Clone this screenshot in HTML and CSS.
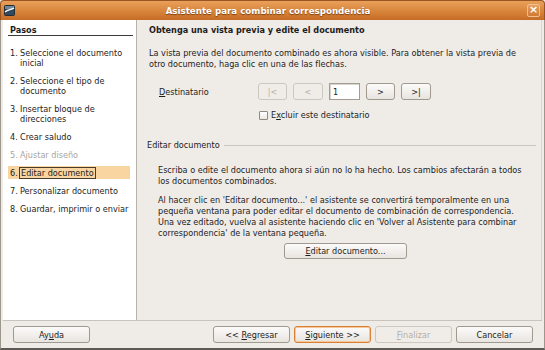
FILE: index.html
```html
<!DOCTYPE html>
<html lang="es">
<head>
<meta charset="utf-8">
<title>Asistente para combinar correspondencia</title>
<link rel="stylesheet" href="styles.css">
</head>
<body>
<div class="window">
  <header class="titlebar">
    <svg class="app-icon" width="11" height="11" viewBox="0 0 11 11">
      <rect x="0.5" y="0.5" width="10" height="10" rx="1" fill="#33485a" stroke="#1f2d38"/>
      <rect x="1" y="1" width="9" height="3" fill="#6f8797"/>
      <path d="M1 7 C4 4.5 7 5 10 3" stroke="#ffffff" stroke-width="1.4" fill="none"/>
    </svg>
    <div class="title">Asistente para combinar correspondencia</div>
    <div class="close">×</div>
  </header>
  <div class="frame">
    <div class="main">
      <nav class="steps">
        <div class="steps-title">Pasos</div>
        <ol class="step-list">
          <li class="step"><span class="num">1.</span><span class="txt">Seleccione el documento inicial</span></li>
          <li class="step"><span class="num">2.</span><span class="txt">Seleccione el tipo de documento</span></li>
          <li class="step"><span class="num">3.</span><span class="txt">Insertar bloque de direcciones</span></li>
          <li class="step"><span class="num">4.</span><span class="txt">Crear saludo</span></li>
          <li class="step disabled"><span class="num">5.</span><span class="txt">Ajustar diseño</span></li>
          <li class="step current"><span class="num">6.</span><span class="txt"><span class="focus">Editar documento</span></span></li>
          <li class="step"><span class="num">7.</span><span class="txt">Personalizar documento</span></li>
          <li class="step"><span class="num">8.</span><span class="txt">Guardar, imprimir o enviar</span></li>
        </ol>
      </nav>
      <section class="page">
        <h1 class="page-title">Obtenga una vista previa y edite el documento</h1>
        <p class="intro">La vista previa del documento combinado es ahora visible. Para obtener la vista previa de<br>otro documento, haga clic en una de las flechas.</p>
        <div class="nav-row">
          <span class="nav-label"><u>D</u>estinatario</span>
          <div class="nav-controls">
            <span class="btn small disabled"><span>|&lt;</span></span>
            <span class="btn small disabled wide"><span>&lt;</span></span>
            <span class="field">1</span>
            <span class="btn small"><span>&gt;</span></span>
            <span class="btn small wide"><span>&gt;|</span></span>
          </div>
        </div>
        <div class="check-row">
          <span class="checkbox"></span>
          <span>E<u>x</u>cluir este destinatario</span>
        </div>
        <div class="group-head">
          <span>Editar documento</span>
          <span class="group-line"></span>
        </div>
        <div class="group-body">
          <p>Escriba o edite el documento ahora si aún no lo ha hecho. Los cambios afectarán a todos<br>los documentos combinados.</p>
          <p class="second">Al hacer clic en 'Editar documento...' el asistente se convertirá temporalmente en una<br>pequeña ventana para poder editar el documento de combinación de correspondencia.<br>Una vez editado, vuelva al asistente haciendo clic en 'Volver al Asistente para combinar<br>correspondencia' de la ventana pequeña.</p>
          <div class="edit-wrap">
            <span class="btn edit"><span><u>E</u>ditar documento...</span></span>
          </div>
        </div>
      </section>
    </div>
    <footer class="footer">
      <span class="btn foot"><span>Ay<u>u</u>da</span></span>
      <div class="foot-right">
        <span class="btn foot"><span>&lt;&lt; <u>R</u>egresar</span></span>
        <span class="btn foot default"><span><u>S</u>iguiente &gt;&gt;</span></span>
        <span class="btn foot disabled"><span><u>F</u>inalizar</span></span>
        <span class="btn foot"><span>Cancelar</span></span>
      </div>
    </footer>
  </div>
</div>
</body>
</html>
```
FILE: styles.css
```css
* { box-sizing: border-box; }
html, body { margin: 0; padding: 0; }
body {
  width: 545px;
  height: 350px;
  overflow: hidden;
  font-family: "DejaVu Sans", "Liberation Sans", sans-serif;
  font-size: 8.15px;
  color: #1c1c1c;
  background: #efebe7;
}
.window {
  width: 545px;
  height: 350px;
  display: flex;
  flex-direction: column;
}
.titlebar {
  height: 20px;
  flex: none;
  display: flex;
  align-items: center;
  padding: 0 4px 0 3px;
  background: linear-gradient(#e9a05a, #d8843b 55%, #c56c26);
  border: 1px solid #9a5420;
  border-bottom: none;
  border-radius: 4px 4px 0 0;
}
.app-icon { flex: none; }
.title {
  flex: 1;
  text-align: center;
  color: #ffffff;
  font-weight: bold;
  font-size: 8.7px;
  text-shadow: 0 1px 1px #7b3f0e;
  padding-right: 6px;
}
.close {
  width: 13px;
  height: 13px;
  flex: none;
  border: 1px solid #f1bf8c;
  border-radius: 2px;
  background: linear-gradient(#e5a15f, #cf7a33);
  color: #fff;
  font-size: 11px;
  line-height: 10px;
  text-align: center;
  font-weight: bold;
}
.frame {
  flex: 1;
  display: flex;
  flex-direction: column;
  border-left: 1px solid #9d968d;
  border-right: 1px solid #9d968d;
  border-bottom: 2px solid #5d5954;
  padding: 0 2px 1px 2px;
}
.main {
  height: 300px;
  flex: none;
  display: flex;
}
.steps {
  width: 134px;
  flex: none;
  background: #ffffff;
  border-right: 1px solid #b7b2ab;
  padding-top: 5px;
}
.steps-title {
  margin: 0 3px 0 5px;
  padding-left: 2px;
  font-weight: bold;
  line-height: 10px;
  border-bottom: 1px solid #3c3c3c;
}
.step-list {
  list-style: none;
  margin: 10px 6px 0 5px;
  padding: 0;
  display: flex;
  flex-direction: column;
  gap: 5px;
}
.step {
  display: flex;
  line-height: 10px;
  padding: 1.5px 0 1.5px 2px;
}
.num { width: 10px; flex: none; }
.txt { flex: 1; }
.step.disabled { color: #aaa49c; }
.step.current { background: #f9d6a1; }
.focus { outline: 1px solid #4a3c2c; outline-offset: 0; padding: 0 1px; }
.page {
  flex: 1;
  padding: 5px 5px 0 12px;
  border-right: 1px solid #dcd7d1;
}
.page-title {
  margin: 0;
  font-size: 8.15px;
  font-weight: bold;
  line-height: 10px;
}
.intro {
  margin: 12.5px 0 0 0;
  line-height: 11px;
}
.nav-row {
  display: flex;
  align-items: center;
  margin-top: 13.5px;
  padding-left: 10px;
  height: 17px;
}
.nav-label { width: 99px; flex: none; }
.nav-controls { display: flex; gap: 6px; }
.btn {
  display: inline-flex;
  align-items: center;
  justify-content: center;
  border: 1px solid #9f998f;
  border-radius: 3px;
  background: linear-gradient(#fcfbfa, #e8e4df);
  color: #1c1c1c;
  white-space: nowrap;
}
.btn.small { width: 29px; height: 17px; }
.btn.small.wide { width: 30px; }
.btn.disabled {
  border-color: #ccc7c0;
  background: #f0ede9;
  color: #b4aea6;
}
.field {
  width: 31px;
  height: 17px;
  display: inline-flex;
  align-items: center;
  padding-left: 3px;
  background: #ffffff;
  border: 1px solid #a29c93;
  box-shadow: inset 1px 1px 0 #d8d4ce;
}
.check-row {
  display: flex;
  align-items: center;
  gap: 3px;
  margin-top: 9px;
  padding-left: 110px;
  line-height: 10px;
}
.checkbox {
  width: 9px;
  height: 9px;
  border: 1px solid #8f897f;
  border-radius: 1px;
  background: linear-gradient(#ffffff, #ebe8e4);
  margin-top: 2px;
}
.group-head {
  display: flex;
  align-items: center;
  gap: 4px;
  margin: 20px 0 0 -2px;
  line-height: 10px;
}
.group-line {
  flex: 1;
  height: 1px;
  background: #cbc6bf;
  margin-top: 1px;
}
.group-body { padding-left: 9px; }
.group-body p { margin: 14.5px 0 0 0; line-height: 11px; }
.group-body p.second { margin-top: 8px; }
.edit-wrap {
  display: flex;
  justify-content: center;
  margin-top: 4px;
  padding-right: 3px;
}
.btn.edit { width: 123px; height: 16px; }
.footer {
  flex: 1;
  display: flex;
  justify-content: space-between;
  align-items: flex-start;
  border-top: 1px solid #c8c3bc;
  padding: 5px 9px 0 10px;
}
.foot-right { display: flex; gap: 4px; }
.btn.foot { width: 77px; height: 17px; }
.btn.default {
  border-color: #d97f36;
  box-shadow: inset 0 0 0 1px #f6c695;
}
```
